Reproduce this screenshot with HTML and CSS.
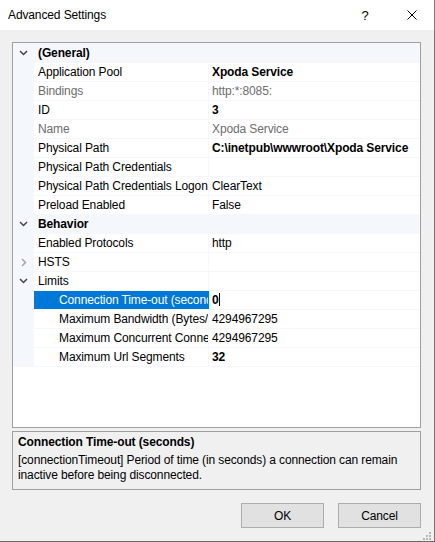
FILE: index.html
```html
<!DOCTYPE html>
<html>
<head>
<meta charset="utf-8">
<link rel="stylesheet" href="styles.css">
</head>
<body>
<div class="window">
  <div class="titlebar">
    <div class="title">Advanced Settings</div>
    <div class="capbtn help">?</div>
    <div class="capbtn close">
      <svg width="10" height="10" viewBox="0 0 10 10"><path d="M0.5 0.5 L9.5 9.5 M9.5 0.5 L0.5 9.5" stroke="#000" stroke-width="1" fill="none"/></svg>
    </div>
  </div>
  <div class="body">
    <div class="grid">
      <div class="rows">
        <div class="row cat">
          <div class="gutter"><svg width="9" height="6" viewBox="0 0 9 6"><path d="M1 1 L4.5 4.5 L8 1" stroke="#444" stroke-width="1.5" fill="none"/></svg></div>
          <div class="catname">(General)</div>
        </div>
        <div class="row"><div class="gutter"></div><div class="name">Application Pool</div><div class="value bold">Xpoda Service</div></div>
        <div class="row"><div class="gutter"></div><div class="name dis">Bindings</div><div class="value dis">http:*:8085:</div></div>
        <div class="row"><div class="gutter"></div><div class="name">ID</div><div class="value bold">3</div></div>
        <div class="row"><div class="gutter"></div><div class="name dis">Name</div><div class="value dis">Xpoda Service</div></div>
        <div class="row"><div class="gutter"></div><div class="name">Physical Path</div><div class="value bold">C:\inetpub\wwwroot\Xpoda Service</div></div>
        <div class="row"><div class="gutter"></div><div class="name">Physical Path Credentials</div><div class="value"></div></div>
        <div class="row"><div class="gutter"></div><div class="name">Physical Path Credentials Logon</div><div class="value">ClearText</div></div>
        <div class="row"><div class="gutter"></div><div class="name">Preload Enabled</div><div class="value">False</div></div>
        <div class="row cat">
          <div class="gutter"><svg width="9" height="6" viewBox="0 0 9 6"><path d="M1 1 L4.5 4.5 L8 1" stroke="#444" stroke-width="1.5" fill="none"/></svg></div>
          <div class="catname">Behavior</div>
        </div>
        <div class="row"><div class="gutter"></div><div class="name">Enabled Protocols</div><div class="value">http</div></div>
        <div class="row">
          <div class="gutter"><svg width="6" height="9" viewBox="0 0 6 9"><path d="M1 1 L4.5 4.5 L1 8" stroke="#a6a6a6" stroke-width="1.5" fill="none"/></svg></div>
          <div class="name">HSTS</div><div class="value"></div>
        </div>
        <div class="row">
          <div class="gutter"><svg width="9" height="6" viewBox="0 0 9 6"><path d="M1 1 L4.5 4.5 L8 1" stroke="#444" stroke-width="1.5" fill="none"/></svg></div>
          <div class="name">Limits</div><div class="value"></div>
        </div>
        <div class="row"><div class="gutter"></div><div class="name child selected">Connection Time-out (seconds)</div><div class="value bold">0<span class="caret"></span></div></div>
        <div class="row"><div class="gutter"></div><div class="name child">Maximum Bandwidth (Bytes/second)</div><div class="value">4294967295</div></div>
        <div class="row"><div class="gutter"></div><div class="name child">Maximum Concurrent Connections</div><div class="value">4294967295</div></div>
        <div class="row"><div class="gutter"></div><div class="name child">Maximum Url Segments</div><div class="value bold">32</div></div>
      </div>
    </div>
    <div class="desc">
      <div class="desc-title">Connection Time-out (seconds)</div>
      <div class="desc-text">[connectionTimeout] Period of time (in seconds) a connection can remain<br>inactive before being disconnected.</div>
    </div>
    <div class="buttons">
      <div class="btn">OK</div>
      <div class="btn">Cancel</div>
    </div>
  </div>
  <svg class="grip" width="9" height="9" viewBox="0 0 9 9">
    <rect x="7" y="1" width="2" height="2" fill="#b8b8b8"/>
    <rect x="4" y="4" width="2" height="2" fill="#b8b8b8"/>
    <rect x="7" y="4" width="2" height="2" fill="#b8b8b8"/>
    <rect x="1" y="7" width="2" height="2" fill="#b8b8b8"/>
    <rect x="4" y="7" width="2" height="2" fill="#b8b8b8"/>
    <rect x="7" y="7" width="2" height="2" fill="#b8b8b8"/>
  </svg>
</div>
</body>
</html>
```
FILE: styles.css
```css
html, body {
  margin: 0;
  padding: 0;
}
body {
  font-family: "Liberation Sans", Arial, sans-serif;
  font-size: 12px;
  letter-spacing: -0.12px;
  color: #000;
  background: #f0f0f0;
}
.window {
  position: relative;
  width: 435px;
  height: 542px;
  box-sizing: border-box;
  border-right: 1px solid #7a7a7a;
  border-bottom: 1px solid #6a6a6a;
  background: #f0f0f0;
  display: flex;
  flex-direction: column;
}
.titlebar {
  height: 30px;
  background: #fff;
  display: flex;
  align-items: stretch;
}
.title {
  flex: 1;
  padding-left: 8px;
  line-height: 30px;
}
.capbtn {
  width: 46px;
  display: flex;
  align-items: center;
  justify-content: center;
}
.help {
  font-size: 13px;
}
.close svg {
  margin-left: 1px;
}
.body {
  flex: 1;
  display: flex;
  flex-direction: column;
  padding: 12px 13px 13px 12px;
}
.grid {
  height: 386px;
  box-sizing: border-box;
  border: 1px solid #a0a0a0;
  background: #fff;
  overflow: hidden;
}
.rows {
  border-top: 1px solid #f4f7fc;
}
.row {
  display: flex;
  height: 18px;
  line-height: 18px;
  border-bottom: 1px solid #f4f7fc;
  white-space: nowrap;
}
.gutter {
  width: 21px;
  flex: none;
  background: #f4f7fc;
  display: flex;
  align-items: center;
  justify-content: center;
}
.cat {
  background: #f4f7fc;
}
.catname {
  font-weight: bold;
  padding-left: 4px;
}
.name {
  width: 175px;
  flex: none;
  box-sizing: border-box;
  padding-left: 4px;
  overflow: hidden;
  border-right: 1px solid #f4f7fc;
}
.name.child {
  padding-left: 25px;
}
.name.selected {
  background: #0078d7;
  color: #fff;
  border-right-color: #0078d7;
}
.value {
  flex: 1;
  padding-left: 3px;
  overflow: hidden;
}
.bold {
  font-weight: bold;
}
.dis {
  color: #6d6d6d;
}
.caret {
  display: inline-block;
  width: 1px;
  height: 13px;
  background: #000;
  vertical-align: -2px;
}
.desc {
  margin-top: 3px;
  height: 59px;
  box-sizing: border-box;
  border: 1px solid #a0a0a0;
  padding: 3px 5px 0 5px;
  line-height: 15px;
}
.desc-title {
  font-weight: bold;
  margin-bottom: 3px;
}
.buttons {
  margin-top: 13px;
  display: flex;
  justify-content: flex-end;
  gap: 14px;
}
.btn {
  width: 83px;
  height: 25px;
  box-sizing: border-box;
  border: 1px solid #adadad;
  background: #e1e1e1;
  display: flex;
  align-items: center;
  justify-content: center;
}
.grip {
  position: absolute;
  left: 422px;
  top: 531px;
}
```
